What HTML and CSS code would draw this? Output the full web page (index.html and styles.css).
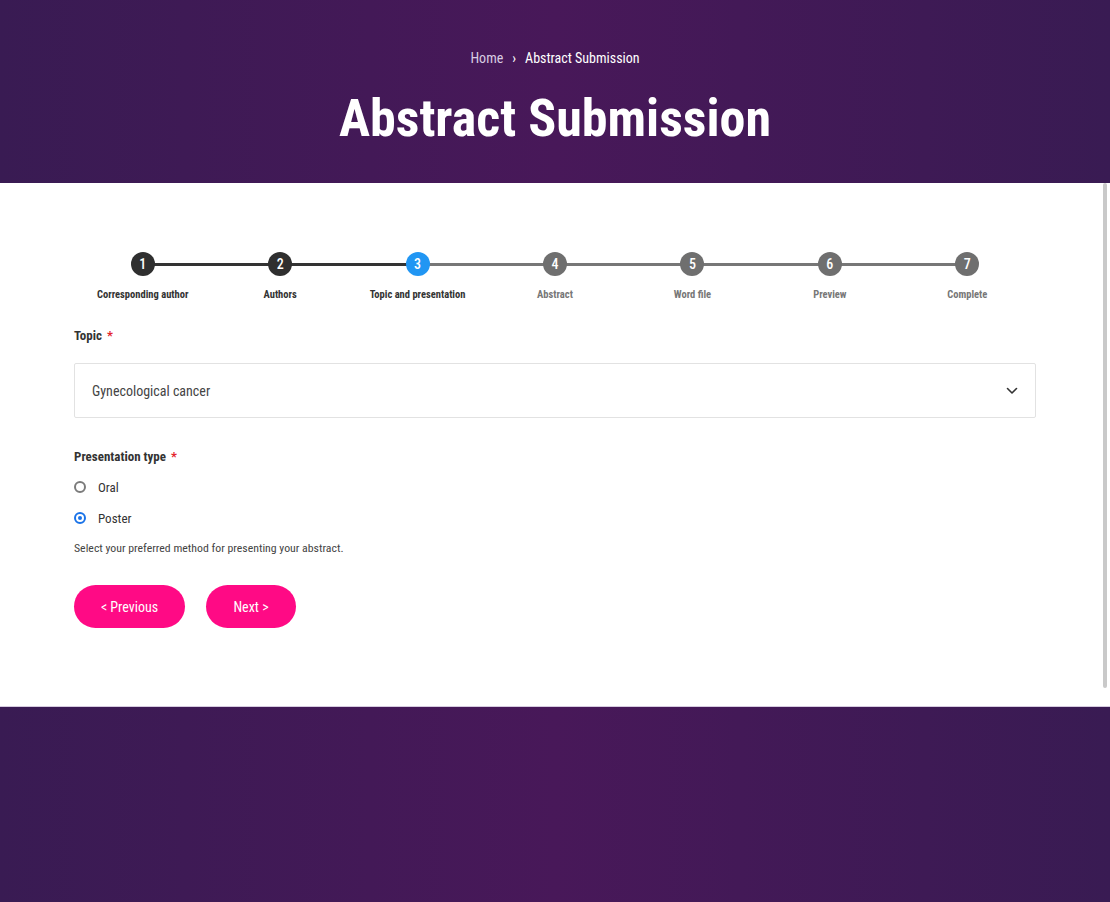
FILE: index.html
```html
<!DOCTYPE html>
<html lang="en">
<head>
<meta charset="utf-8">
<title>Abstract Submission</title>
<link rel="stylesheet" href="styles.css">
</head>
<body>
<header class="hero">
  <nav class="crumbs"><span class="crumb-home">Home</span><span class="crumb-sep">›</span><span class="crumb-current">Abstract Submission</span></nav>
  <h1 class="hero-title">Abstract Submission</h1>
</header>
<section class="panel">
  <div class="content">
    <ol class="stepper">
      <li class="step done"><span class="dot">1</span><span class="step-label">Corresponding author</span></li>
      <li class="step done"><span class="dot">2</span><span class="step-label">Authors</span></li>
      <li class="step active"><span class="dot">3</span><span class="step-label">Topic and presentation</span></li>
      <li class="step"><span class="dot">4</span><span class="step-label">Abstract</span></li>
      <li class="step"><span class="dot">5</span><span class="step-label">Word file</span></li>
      <li class="step"><span class="dot">6</span><span class="step-label">Preview</span></li>
      <li class="step"><span class="dot">7</span><span class="step-label">Complete</span></li>
    </ol>

    <div class="field-label field-topic">Topic <span class="req">*</span></div>
    <div class="select">
      <span class="select-value">Gynecological cancer</span>
      <svg class="chev" width="12" height="8" viewBox="0 0 12 8"><path d="M1.5 1.5 L6 6 L10.5 1.5" fill="none" stroke="#333" stroke-width="1.6" stroke-linecap="round" stroke-linejoin="round"/></svg>
    </div>

    <div class="field-label field-type">Presentation type <span class="req">*</span></div>
    <div class="radios">
      <div class="radio"><span class="radio-ring"></span><span class="radio-text">Oral</span></div>
      <div class="radio checked"><span class="radio-ring"></span><span class="radio-text">Poster</span></div>
    </div>
    <p class="help">Select your preferred method for presenting your abstract.</p>

    <div class="buttons">
      <button class="btn btn-prev">&lt; Previous</button>
      <button class="btn btn-next">Next &gt;</button>
    </div>
  </div>
  <div class="scrollbar"></div>
</section>
<footer class="foot"></footer>
</body>
</html>
```

FILE: styles.css
```css
html, body {
  margin: 0;
  padding: 0;
}
body {
  font-family: "Roboto Condensed", Roboto, "Liberation Sans", sans-serif;
  background: linear-gradient(90deg, #391b53 0%, #481859 50%, #391b53 100%);
  color: #333;
  min-height: 902px;
}
.hero {
  height: 183px;
  box-sizing: border-box;
  padding-top: 48px;
  text-align: center;
  color: #fff;
  background: linear-gradient(90deg, #391b53 0%, #481859 50%, #391b53 100%);
}
.crumbs {
  font-size: 14px;
  line-height: 20px;
  display: flex;
  justify-content: center;
  gap: 9px;
}
.crumb-home { color: #d9cde3; }
.crumb-sep { color: #fff; }
.crumb-current { color: #fff; }
.hero-title {
  margin: 21px 0 0;
  font-size: 52px;
  line-height: 60px;
  font-weight: 700;
}
.panel {
  background: #fff;
  height: 523px;
  display: flex;
  border-bottom: 1px solid #d6cbdf;
}
.content {
  flex: 1;
  padding: 69px 0 0 74px;
  box-sizing: border-box;
}
.content > * { width: 962px; }
.scrollbar {
  width: 4px;
  height: 505px;
  margin-right: 3px;
  background: #c9c9c9;
  border-radius: 2px;
}
.stepper {
  list-style: none;
  margin: 0;
  padding: 0;
  display: grid;
  grid-template-columns: repeat(7, 1fr);
}
.step {
  position: relative;
  display: flex;
  flex-direction: column;
  align-items: center;
}
.step + .step::before {
  content: "";
  position: absolute;
  top: 11px;
  right: 50%;
  width: 100%;
  height: 3px;
  background: #777;
}
.step.done::before, .step.active::before { background: #333; }
.dot {
  position: relative;
  z-index: 1;
  width: 24px;
  height: 24px;
  border-radius: 50%;
  background: #6f6f6f;
  color: #fff;
  font-size: 14px;
  line-height: 24px;
  text-align: center;
  font-weight: 500;
}
.step.done .dot { background: #2f2f2f; }
.step.active .dot { background: #2196f3; }
.step-label {
  margin-top: 12px;
  font-size: 10.5px;
  line-height: 14px;
  font-weight: 700;
  color: #777;
}
.step.done .step-label, .step.active .step-label { color: #333; }

.field-label {
  font-size: 13px;
  line-height: 18px;
  font-weight: 700;
  color: #333;
}
.field-topic { margin-top: 25px; }
.req { color: #e3262d; margin-left: 2px; }
.select {
  margin-top: 18px;
  height: 55px;
  box-sizing: border-box;
  border: 1px solid #e2e2e2;
  border-radius: 2px;
  display: flex;
  align-items: center;
  justify-content: space-between;
  padding: 0 17px 0 17px;
}
.select-value {
  font-size: 14px;
  color: #444;
}
.field-type { margin-top: 30px; }
.radios {
  margin-top: 12px;
  display: flex;
  flex-direction: column;
  gap: 13px;
}
.radio {
  display: flex;
  align-items: center;
  height: 18px;
}
.radio-ring {
  width: 12px;
  height: 12px;
  box-sizing: border-box;
  border: 2px solid #7b7b7b;
  border-radius: 50%;
  position: relative;
}
.radio.checked .radio-ring { border-color: #1a73e8; }
.radio.checked .radio-ring::after {
  content: "";
  position: absolute;
  left: 2px;
  top: 2px;
  width: 4px;
  height: 4px;
  border-radius: 50%;
  background: #1a73e8;
}
.radio-text {
  margin-left: 12px;
  font-size: 13px;
  color: #333;
}
.help {
  margin: 13px 0 0;
  font-size: 11.8px;
  line-height: 16px;
  color: #444;
}
.buttons {
  margin-top: 29px;
  display: flex;
  gap: 21px;
}
.btn {
  height: 43px;
  border: none;
  border-radius: 22px;
  background: #ff0a85;
  color: #fff;
  font-family: inherit;
  font-size: 14px;
  cursor: pointer;
}
.btn-prev { width: 111px; }
.btn-next { width: 90px; }
.foot {
  height: 196px;
}
```
